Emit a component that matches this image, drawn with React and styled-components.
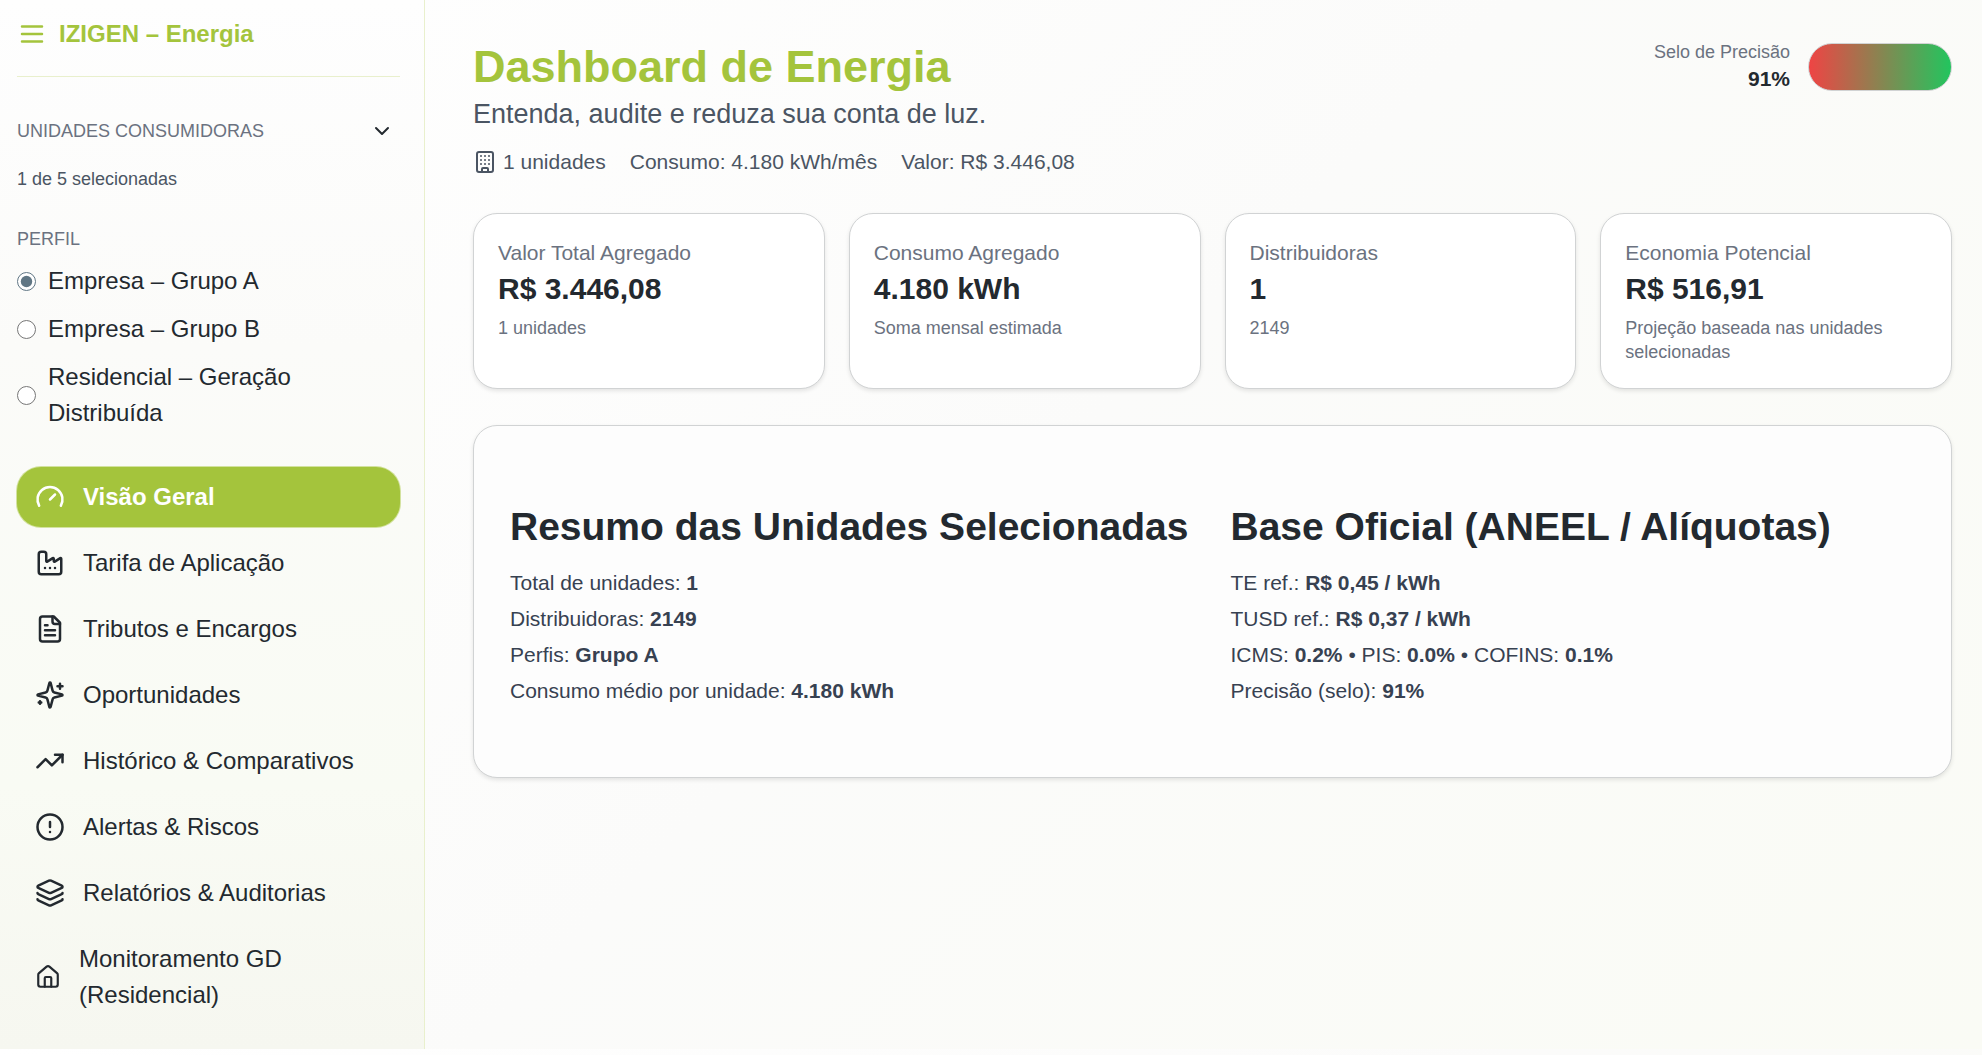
import React, { useState } from 'react';
import styled, { createGlobalStyle } from 'styled-components';
import {
    Building,
    ChevronDown,
    CircleAlert,
    Factory,
    House,
    Layers,
    TrendingUp,
} from 'lucide-react';

const colors = {
    brand: '#a4c43c',
    outline: '#d1d3d4',
    divider: '#e9f0cd',
    dark: '#23292f',
    body: '#374151',
    medium: '#4b5563',
    light: '#6b7280',
};

const GlobalStyle = createGlobalStyle`
    *, *::before, *::after {
        box-sizing: border-box;
    }
    body {
        margin: 0;
        background: linear-gradient(135deg, #ffffff 0%, #fbfbfa 50%, #fafbf5 100%);
        color: ${colors.dark};
        font-family: "Liberation Sans", Arial, sans-serif;
        font-size: 24px;
        line-height: 36px;
    }
    h1, h2, p, ul, fieldset {
        margin: 0;
        padding: 0;
        border: 0;
    }
`;

const Layout = styled.div`
    display: flex;
    align-items: flex-start;
`;

const Sidebar = styled.aside`
    flex: 0 0 425px;
    padding: 16px 24px 24px 17px;
    border-right: 1px solid ${colors.divider};
    background: linear-gradient(180deg, #fefefe 0%, #fbfbf9 33%, #f9fbf4 75%, #f6f7f0 100%);
`;

const Brand = styled.div`
    display: flex;
    align-items: center;
    gap: 12px;
    padding-bottom: 24px;
    border-bottom: 1px solid ${colors.divider};
    color: ${colors.brand};
    font-weight: bold;
`;

const SectionHeader = styled.div`
    display: flex;
    align-items: center;
    justify-content: space-between;
    margin-top: 36px;
`;

const SectionTitle = styled.div`
    color: ${colors.light};
    font-size: 18px;
    line-height: 24px;
    text-transform: uppercase;
`;

const ToggleButton = styled.button`
    display: flex;
    padding: 6px;
    border: 0;
    background: none;
    color: inherit;
    cursor: pointer;
`;

const Selected = styled.p`
    margin-top: 18px;
    color: ${colors.medium};
    font-size: 18px;
    line-height: 24px;
`;

const Profiles = styled.fieldset`
    display: flex;
    flex-direction: column;
    gap: 12px;
    margin-top: 36px;
`;

const ProfileOption = styled.label`
    display: flex;
    align-items: center;
    gap: 12px;
    cursor: pointer;
    input {
        flex: none;
        width: 19px;
        height: 19px;
        margin: 0;
        accent-color: #607684;
    }
`;

const Nav = styled.nav`
    display: flex;
    flex-direction: column;
    gap: 6px;
    margin-top: 36px;
`;

const NavButton = styled.button`
    display: flex;
    align-items: center;
    gap: 18px;
    padding: 12px 18px;
    border: 0;
    border-radius: 24px;
    background: ${({ $active }) => ($active ? colors.brand : 'transparent')};
    box-shadow: ${({ $active }) => ($active ? '0 0 0 1px #d3e29f' : 'none')};
    color: ${({ $active }) => ($active ? '#ffffff' : 'inherit')};
    font: inherit;
    font-weight: ${({ $active }) => ($active ? 'bold' : 'normal')};
    text-align: left;
    cursor: pointer;
`;

const Main = styled.main`
    flex: 1;
    min-width: 0;
    padding: 40px 30px 36px 48px;
`;

const Header = styled.header`
    display: flex;
    align-items: flex-start;
    justify-content: space-between;
    gap: 24px;
`;

const Title = styled.h1`
    color: ${colors.brand};
    font-size: 45px;
    line-height: 53px;
`;

const Subtitle = styled.p`
    color: ${colors.medium};
    font-size: 27px;
    line-height: 42px;
`;

const Totals = styled.div`
    display: flex;
    gap: 24px;
    margin-top: 12px;
    color: ${colors.medium};
    font-size: 21px;
    line-height: 30px;
    span {
        display: flex;
        align-items: center;
        gap: 6px;
    }
`;

const Seal = styled.div`
    display: flex;
    align-items: center;
    gap: 18px;
    text-align: right;
`;

const SealLabel = styled.div`
    color: ${colors.light};
    font-size: 18px;
    line-height: 24px;
`;

const SealValue = styled.div`
    font-size: 21px;
    font-weight: bold;
    line-height: 30px;
`;

const SealBar = styled.div`
    width: 144px;
    height: 48px;
    border: 1px solid ${colors.outline};
    border-radius: 24px;
    background: linear-gradient(90deg, #ef4444, #22c55e);
`;

const Cards = styled.div`
    display: grid;
    grid-template-columns: repeat(4, 1fr);
    gap: 24px;
    margin-top: 36px;
`;

const Card = styled.section`
    padding: 24px;
    border: 1px solid ${colors.outline};
    border-radius: 24px;
    background: #ffffff;
    box-shadow: 0 2px 4px rgba(0, 0, 0, 0.1);
`;

const CardLabel = styled.div`
    color: ${colors.light};
    font-size: 21px;
    line-height: 30px;
`;

const CardValue = styled.div`
    font-size: 30px;
    font-weight: bold;
    line-height: 42px;
`;

const CardNote = styled.div`
    margin-top: 6px;
    color: ${colors.light};
    font-size: 18px;
    line-height: 24px;
`;

const Panel = styled(Card)`
    display: grid;
    grid-template-columns: repeat(2, 1fr);
    gap: 36px;
    margin-top: 36px;
    padding: 72px 36px 68px;
    background: #fdfdfd;
`;

const PanelTitle = styled.h2`
    font-size: 39px;
    line-height: 58px;
`;

const PanelList = styled.ul`
    margin-top: 9px;
    color: ${colors.body};
    font-size: 21px;
    list-style: none;
`;

const Icon = ({ size = 30, children }) => (
    <svg
        width={size}
        height={size}
        viewBox="0 0 24 24"
        fill="none"
        stroke="currentColor"
        strokeWidth="2"
        strokeLinecap="round"
        strokeLinejoin="round"
        aria-hidden="true"
    >
        {children}
    </svg>
);

const MenuIcon = () => (
    <Icon>
        <path d="M4 6h16M4 12h16M4 18h16" />
    </Icon>
);

const GaugeIcon = ({ size }) => (
    <Icon size={size}>
        <path d="m12 14 4-4" />
        <path d="M3.34 19a10 10 0 1 1 17.32 0" />
    </Icon>
);

const DocumentIcon = ({ size }) => (
    <Icon size={size}>
        <path d="M15 2H6a2 2 0 0 0-2 2v16a2 2 0 0 0 2 2h12a2 2 0 0 0 2-2V7Z" />
        <path d="M14 2v4a2 2 0 0 0 2 2h4" />
        <path d="M10 9H8M16 13H8M16 17H8" />
    </Icon>
);

const SparklesIcon = ({ size }) => (
    <Icon size={size}>
        <path d="M9.937 15.5A2 2 0 0 0 8.5 14.063l-6.135-1.582a.5.5 0 0 1 0-.962L8.5 9.936A2 2 0 0 0 9.937 8.5l1.582-6.135a.5.5 0 0 1 .963 0L14.063 8.5A2 2 0 0 0 15.5 9.937l6.135 1.581a.5.5 0 0 1 0 .964L15.5 14.063a2 2 0 0 0-1.437 1.437l-1.582 6.135a.5.5 0 0 1-.963 0z" />
        <path d="M20 3v4M22 5h-4M4 17v2M5 18H3" />
    </Icon>
);

const profiles = [
    'Empresa – Grupo A',
    'Empresa – Grupo B',
    'Residencial – Geração Distribuída',
];

const navItems = [
    { label: 'Visão Geral', icon: GaugeIcon },
    { label: 'Tarifa de Aplicação', icon: Factory },
    { label: 'Tributos e Encargos', icon: DocumentIcon },
    { label: 'Oportunidades', icon: SparklesIcon },
    { label: 'Histórico & Comparativos', icon: TrendingUp },
    { label: 'Alertas & Riscos', icon: CircleAlert },
    { label: 'Relatórios & Auditorias', icon: Layers },
    { label: 'Monitoramento GD (Residencial)', icon: House },
];

const cards = [
    { label: 'Valor Total Agregado', value: 'R$ 3.446,08', note: '1 unidades' },
    { label: 'Consumo Agregado', value: '4.180 kWh', note: 'Soma mensal estimada' },
    { label: 'Distribuidoras', value: '1', note: '2149' },
    { label: 'Economia Potencial', value: 'R$ 516,91', note: 'Projeção baseada nas unidades selecionadas' },
];

export default function App() {
    const [profile, setProfile] = useState(profiles[0]);
    const [active, setActive] = useState(navItems[0].label);

    return (
        <>
            <GlobalStyle />
            <Layout>
                <Sidebar>
                    <Brand>
                        <MenuIcon />
                        <span>IZIGEN – Energia</span>
                    </Brand>
                    <SectionHeader>
                        <SectionTitle>Unidades Consumidoras</SectionTitle>
                        <ToggleButton type="button" aria-label="Mostrar unidades">
                            <ChevronDown size={24} />
                        </ToggleButton>
                    </SectionHeader>
                    <Selected>1 de 5 selecionadas</Selected>
                    <Profiles>
                        <SectionTitle>Perfil</SectionTitle>
                        {profiles.map((name) => (
                            <ProfileOption key={name}>
                                <input
                                    type="radio"
                                    name="perfil"
                                    checked={profile === name}
                                    onChange={() => setProfile(name)}
                                />
                                <span>{name}</span>
                            </ProfileOption>
                        ))}
                    </Profiles>
                    <Nav>
                        {navItems.map(({ label, icon: NavIcon }) => (
                            <NavButton
                                key={label}
                                type="button"
                                $active={active === label}
                                onClick={() => setActive(label)}
                            >
                                <NavIcon size={30} />
                                <span>{label}</span>
                            </NavButton>
                        ))}
                    </Nav>
                </Sidebar>
                <Main>
                    <Header>
                        <div>
                            <Title>Dashboard de Energia</Title>
                            <Subtitle>Entenda, audite e reduza sua conta de luz.</Subtitle>
                            <Totals>
                                <span><Building size={24} />1 unidades</span>
                                <span>Consumo: 4.180 kWh/mês</span>
                                <span>Valor: R$ 3.446,08</span>
                            </Totals>
                        </div>
                        <Seal>
                            <div>
                                <SealLabel>Selo de Precisão</SealLabel>
                                <SealValue>91%</SealValue>
                            </div>
                            <SealBar />
                        </Seal>
                    </Header>
                    <Cards>
                        {cards.map((card) => (
                            <Card key={card.label}>
                                <CardLabel>{card.label}</CardLabel>
                                <CardValue>{card.value}</CardValue>
                                <CardNote>{card.note}</CardNote>
                            </Card>
                        ))}
                    </Cards>
                    <Panel>
                        <div>
                            <PanelTitle>Resumo das Unidades Selecionadas</PanelTitle>
                            <PanelList>
                                <li>Total de unidades: <b>1</b></li>
                                <li>Distribuidoras: <b>2149</b></li>
                                <li>Perfis: <b>Grupo A</b></li>
                                <li>Consumo médio por unidade: <b>4.180 kWh</b></li>
                            </PanelList>
                        </div>
                        <div>
                            <PanelTitle>Base Oficial (ANEEL / Alíquotas)</PanelTitle>
                            <PanelList>
                                <li>TE ref.: <b>R$ 0,45 / kWh</b></li>
                                <li>TUSD ref.: <b>R$ 0,37 / kWh</b></li>
                                <li>ICMS: <b>0.2%</b> • PIS: <b>0.0%</b> • COFINS: <b>0.1%</b></li>
                                <li>Precisão (selo): <b>91%</b></li>
                            </PanelList>
                        </div>
                    </Panel>
                </Main>
            </Layout>
        </>
    );
}
